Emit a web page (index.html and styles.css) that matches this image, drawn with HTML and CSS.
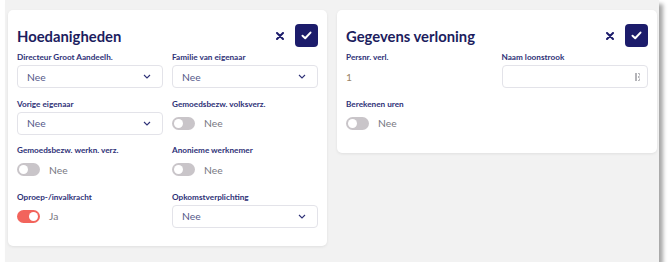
FILE: index.html
```html
<!DOCTYPE html>
<html lang="nl">
<head>
<meta charset="utf-8">
<title>Hoedanigheden</title>
<link rel="stylesheet" href="styles.css">
</head>
<body>
<div class="frame">
  <div class="cards">
    <section class="card card-a">
      <header class="card-head">
        <h2 class="card-title">Hoedanigheden</h2>
        <div class="actions">
          <button class="btn-x" aria-label="Sluiten"><svg width="8" height="8" viewBox="0 0 8 8"><path d="M1 1L7 7M7 1L1 7" stroke="#1c1c6b" stroke-width="2" stroke-linecap="round"/></svg></button>
          <button class="btn-ok" aria-label="Opslaan"><svg width="11" height="9" viewBox="0 0 11 9"><path d="M1.5 4.8L4.2 7.3L9.5 1.6" fill="none" stroke="#fff" stroke-width="2" stroke-linecap="round" stroke-linejoin="round"/></svg></button>
        </div>
      </header>
      <div class="grid">
        <div class="field">
          <div class="label">Directeur Groot Aandeelh.</div>
          <div class="select"><span>Nee</span><svg class="chev" width="8" height="5" viewBox="0 0 8 5"><path d="M1 1L4 4L7 1" fill="none" stroke="#2e3177" stroke-width="1.1"/></svg></div>
        </div>
        <div class="field">
          <div class="label">Familie van eigenaar</div>
          <div class="select"><span>Nee</span><svg class="chev" width="8" height="5" viewBox="0 0 8 5"><path d="M1 1L4 4L7 1" fill="none" stroke="#2e3177" stroke-width="1.1"/></svg></div>
        </div>
        <div class="field">
          <div class="label">Vorige eigenaar</div>
          <div class="select"><span>Nee</span><svg class="chev" width="8" height="5" viewBox="0 0 8 5"><path d="M1 1L4 4L7 1" fill="none" stroke="#2e3177" stroke-width="1.1"/></svg></div>
        </div>
        <div class="field">
          <div class="label">Gemoedsbezw. volksverz.</div>
          <div class="toggle-row"><span class="toggle"></span><span class="toggle-text">Nee</span></div>
        </div>
        <div class="field">
          <div class="label">Gemoedsbezw. werkn. verz.</div>
          <div class="toggle-row"><span class="toggle"></span><span class="toggle-text">Nee</span></div>
        </div>
        <div class="field">
          <div class="label">Anonieme werknemer</div>
          <div class="toggle-row"><span class="toggle"></span><span class="toggle-text">Nee</span></div>
        </div>
        <div class="field">
          <div class="label">Oproep-/invalkracht</div>
          <div class="toggle-row"><span class="toggle on"></span><span class="toggle-text">Ja</span></div>
        </div>
        <div class="field">
          <div class="label">Opkomstverplichting</div>
          <div class="select"><span>Nee</span><svg class="chev" width="8" height="5" viewBox="0 0 8 5"><path d="M1 1L4 4L7 1" fill="none" stroke="#2e3177" stroke-width="1.1"/></svg></div>
        </div>
      </div>
    </section>
    <section class="card card-b">
      <header class="card-head">
        <h2 class="card-title">Gegevens verloning</h2>
        <div class="actions">
          <button class="btn-x" aria-label="Sluiten"><svg width="8" height="8" viewBox="0 0 8 8"><path d="M1 1L7 7M7 1L1 7" stroke="#1c1c6b" stroke-width="2" stroke-linecap="round"/></svg></button>
          <button class="btn-ok" aria-label="Opslaan"><svg width="11" height="9" viewBox="0 0 11 9"><path d="M1.5 4.8L4.2 7.3L9.5 1.6" fill="none" stroke="#fff" stroke-width="2" stroke-linecap="round" stroke-linejoin="round"/></svg></button>
        </div>
      </header>
      <div class="grid">
        <div class="field">
          <div class="label">Persnr. verl.</div>
          <div class="value-row"><span class="value">1</span></div>
        </div>
        <div class="field">
          <div class="label">Naam loonstrook</div>
          <div class="input"><svg class="pm" width="6" height="8" viewBox="0 0 6 8"><rect x="0" y="0" width="2" height="8" fill="#b4b4b8"/><path d="M3 0.5H4.5V2.5M4.5 5.5V7.5H3" fill="none" stroke="#b4b4b8" stroke-width="1"/><rect x="3" y="3" width="1.5" height="2" fill="#b4b4b8"/></svg></div>
        </div>
        <div class="field">
          <div class="label">Berekenen uren</div>
          <div class="toggle-row"><span class="toggle"></span><span class="toggle-text">Nee</span></div>
        </div>
      </div>
    </section>
  </div>
</div>
</body>
</html>
```
FILE: styles.css
```css
html, body {
  margin: 0;
  padding: 0;
  background: #ffffff;
}
body {
  font-family: "Lato", "Noto Sans", sans-serif;
}
.frame {
  margin-left: 5px;
  width: 654px;
  height: 262px;
  box-sizing: border-box;
  padding: 10px 2px 0 3px;
  background: #f2f2f2;
  box-shadow: 4px 4px 4px rgba(0, 0, 0, 0.35);
}
.cards {
  display: flex;
  align-items: flex-start;
  gap: 10px;
}
.card {
  background: #ffffff;
  border-radius: 5px;
  box-shadow: 0 1px 3px rgba(0, 0, 0, 0.08);
  padding: 14px 9px 18px;
  box-sizing: border-box;
}
.card-a { width: 319px; }
.card-b { width: 320px; }
.card-head {
  display: flex;
  align-items: center;
  justify-content: space-between;
  height: 23px;
}
.card-title {
  margin: 0;
  font-size: 14.8px;
  font-weight: 700;
  color: #1c1d5e;
  letter-spacing: 0;
}
.actions {
  display: flex;
  align-items: center;
  gap: 10px;
}
.btn-x {
  border: 0;
  background: none;
  padding: 0;
  width: 10px;
  height: 10px;
  display: flex;
  align-items: center;
  justify-content: center;
}
.btn-ok {
  border: 0;
  padding: 0;
  width: 23px;
  height: 23px;
  border-radius: 4px;
  background: #1c1c6b;
  display: flex;
  align-items: center;
  justify-content: center;
}
.grid {
  margin-top: 4px;
  display: grid;
  grid-template-columns: 1fr 1fr;
  column-gap: 9px;
  row-gap: 9.5px;
}
.label {
  font-size: 8.2px;
  font-weight: 700;
  color: #2e3177;
  line-height: 12px;
  margin-bottom: 2px;
  white-space: nowrap;
}
.select, .input {
  height: 23px;
  box-sizing: border-box;
  border: 1px solid #e3e3e9;
  border-radius: 4px;
  display: flex;
  align-items: center;
  justify-content: space-between;
  padding: 0 11px 0 9px;
  font-size: 10.3px;
  color: #55598a;
}
.input {
  justify-content: flex-end;
  padding-right: 6px;
}
.toggle-row, .value-row {
  height: 23px;
  display: flex;
  align-items: center;
}
.toggle {
  width: 23px;
  height: 13px;
  border-radius: 6.5px;
  background: #c9c5c9;
  position: relative;
  flex: none;
}
.toggle::after {
  content: "";
  position: absolute;
  top: 2px;
  left: 2px;
  width: 9px;
  height: 9px;
  border-radius: 50%;
  background: #ffffff;
}
.toggle.on {
  background: #f2645c;
}
.toggle.on::after {
  left: 12px;
}
.toggle-text {
  margin-left: 9px;
  font-size: 10.3px;
  color: #77777f;
}
.value {
  font-size: 10.3px;
  color: #9a8468;
}
```
